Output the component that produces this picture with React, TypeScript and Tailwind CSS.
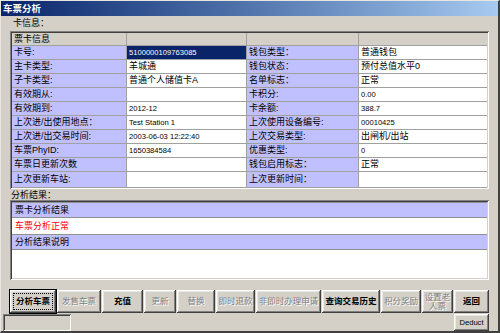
import React from 'react';

type Row = [string, string, string, string];

const rows: Row[] = [
  ['卡号:', '5100000109763085', '钱包类型：', '普通钱包'],
  ['主卡类型:', '羊城通', '钱包状态：', '预付总值水平0'],
  ['子卡类型:', '普通个人储值卡A', '名单标志：', '正常'],
  ['有效期从:', '', '卡积分:', '0.00'],
  ['有效期到:', '2012-12', '卡余额:', '388.7'],
  ['上次进/出使用地点：', 'Test Station 1', '上次使用设备编号:', '00010425'],
  ['上次进/出交易时间:', '2003-06-03 12:22:40', '上次交易类型:', '出闸机/出站'],
  ['车票PhyID:', '1650384584', '优惠类型:', '0'],
  ['车票日更新次数', '', '钱包启用标志：', '正常'],
  ['上次更新车站:', '', '上次更新时间：', ''],
];

const isLatin = (s: string) => /^[\x00-\x7f]+$/.test(s);

const Txt = ({ s }: { s: string }) =>
  isLatin(s) ? <span className="text-[7.6px]">{s}</span> : <span>{s}</span>;

const raised =
  'shadow-[inset_-1px_-1px_0_#404040,inset_1px_1px_0_#ffffff,inset_-2px_-2px_0_#808080,inset_2px_2px_0_#e8e6e0]';
const sunken =
  'shadow-[inset_1px_1px_0_#808080,inset_-1px_-1px_0_#ffffff,inset_2px_2px_0_#404040,inset_-2px_-2px_0_#d4d0c8]';

interface Btn {
  label: React.ReactNode;
  w: string;
  on?: boolean;
  focus?: boolean;
}

const buttons: Btn[] = [
  { label: '分析车票', w: 'w-[46px]', on: true, focus: true },
  { label: '发售车票', w: 'w-[44px]' },
  { label: '充值', w: 'w-[41px]', on: true },
  { label: '更新', w: 'w-[32px]' },
  { label: '替换', w: 'w-[38px]' },
  { label: '即时退款', w: 'w-[39px]' },
  { label: '非即时办理申请', w: 'w-[65px]' },
  { label: '查询交易历史', w: 'w-[58px]', on: true },
  { label: '积分奖励', w: 'w-[40px]' },
  { label: <>设置老<br />人票</>, w: 'w-[31px]' },
  { label: '返回', w: 'w-[35px]', on: true },
];

const Button = ({ label, w, on, focus }: Btn) => (
  <div
    className={`${w} h-[23px] shrink-0 flex items-center justify-center bg-[#d4d0c8] text-center text-[8.5px] leading-[9px] whitespace-nowrap ${
      focus ? 'outline outline-1 outline-black' : ''
    } ${raised}`}
  >
    <div
      className={`${focus ? 'border border-dotted border-black px-[2px] py-[3px]' : ''} ${
        on ? 'font-bold text-black' : 'text-[#808080] [text-shadow:1px_1px_0_#ffffff]'
      }`}
    >
      {label}
    </div>
  </div>
);

export default function App() {
  return (
    <div className="w-[500px] h-[333px] bg-[#d4d0c8] border-l border-t border-[#e8e6e0] border-r-2 border-b-2 border-r-[#404040] border-b-[#404040] flex flex-col overflow-hidden text-[9px] text-black font-['Liberation_Sans','Noto_Sans_CJK_SC',sans-serif] leading-none">
      {/* title bar */}
      <div className="h-[15px] shrink-0 flex items-center pl-[2px] bg-gradient-to-r from-[#0a246a] to-[#a6caf0] text-white font-bold text-[9.5px]">
        车票分析
      </div>

      <div className="h-[15px] shrink-0 flex items-end pb-[3px] pl-[12px]">卡信息：</div>

      {/* card info table */}
      <div className={`ml-[9px] w-[479px] h-[158px] shrink-0 p-[2px] bg-[#d4d0c8] ${sunken}`}>
        <div className="grid grid-cols-[114px_119px_111px_1fr] gap-px bg-[#a0a0a0] border-b border-[#a0a0a0]">
          <div className="h-[12px] bg-[#d4d0c8] flex items-center pl-[2px]">票卡信息</div>
          <div className="h-[12px] bg-[#d4d0c8]" />
          <div className="h-[12px] bg-[#d4d0c8]" />
          <div className="h-[12px] bg-[#d4d0c8]" />
          {rows.map((r, i) => {
            const h = i === rows.length - 1 ? 'h-[15px]' : 'h-[13px]';
            return (
              <React.Fragment key={i}>
                <div className={`${h} bg-[#c0c0ff] flex items-center pl-[2px]`}>
                  <Txt s={r[0]} />
                </div>
                <div
                  className={`${h} flex items-center pl-[2px] ${
                    i === 0 ? 'bg-[#0a246a] text-white' : 'bg-white'
                  }`}
                >
                  <Txt s={r[1]} />
                </div>
                <div className={`${h} bg-[#c0c0ff] flex items-center pl-[2px]`}>
                  <Txt s={r[2]} />
                </div>
                <div className={`${h} bg-white flex items-center pl-[2px]`}>
                  <Txt s={r[3]} />
                </div>
              </React.Fragment>
            );
          })}
        </div>
      </div>

      <div className="h-[11px] shrink-0 flex items-center pl-[10px] pt-[1px]">分析结果：</div>

      {/* analysis result */}
      <div className={`ml-[9px] w-[479px] h-[80px] shrink-0 p-[2px] bg-white flex flex-col ${sunken}`}>
        <div className="h-[16px] bg-[#c0c0ff] border-t border-b border-[#909090] flex items-center pl-[3px]">
          票卡分析结果
        </div>
        <div className="h-[16px] bg-white flex items-center pl-[3px] text-[#ff0000]">车票分析正常</div>
        <div className="h-[16px] bg-[#c0c0ff] border-t border-b border-[#909090] flex items-center pl-[3px]">
          分析结果说明
        </div>
        <div className="flex-1 bg-white" />
      </div>

      {/* buttons */}
      <div className="mt-[10px] ml-[9px] flex gap-px">
        {buttons.map((b, i) => (
          <Button key={i} {...b} />
        ))}
      </div>

      {/* status bar */}
      <div className="flex-1 flex items-start pt-[1px] pl-[2px] pr-[9px]">
        <div className={`w-[68px] h-[17px] ${sunken}`} />
        <div className="flex-1" />
        <div className={`w-[35px] h-[17px] flex items-center justify-center text-[7.6px] ${raised}`}>
          Deduct
        </div>
      </div>
    </div>
  );
}
